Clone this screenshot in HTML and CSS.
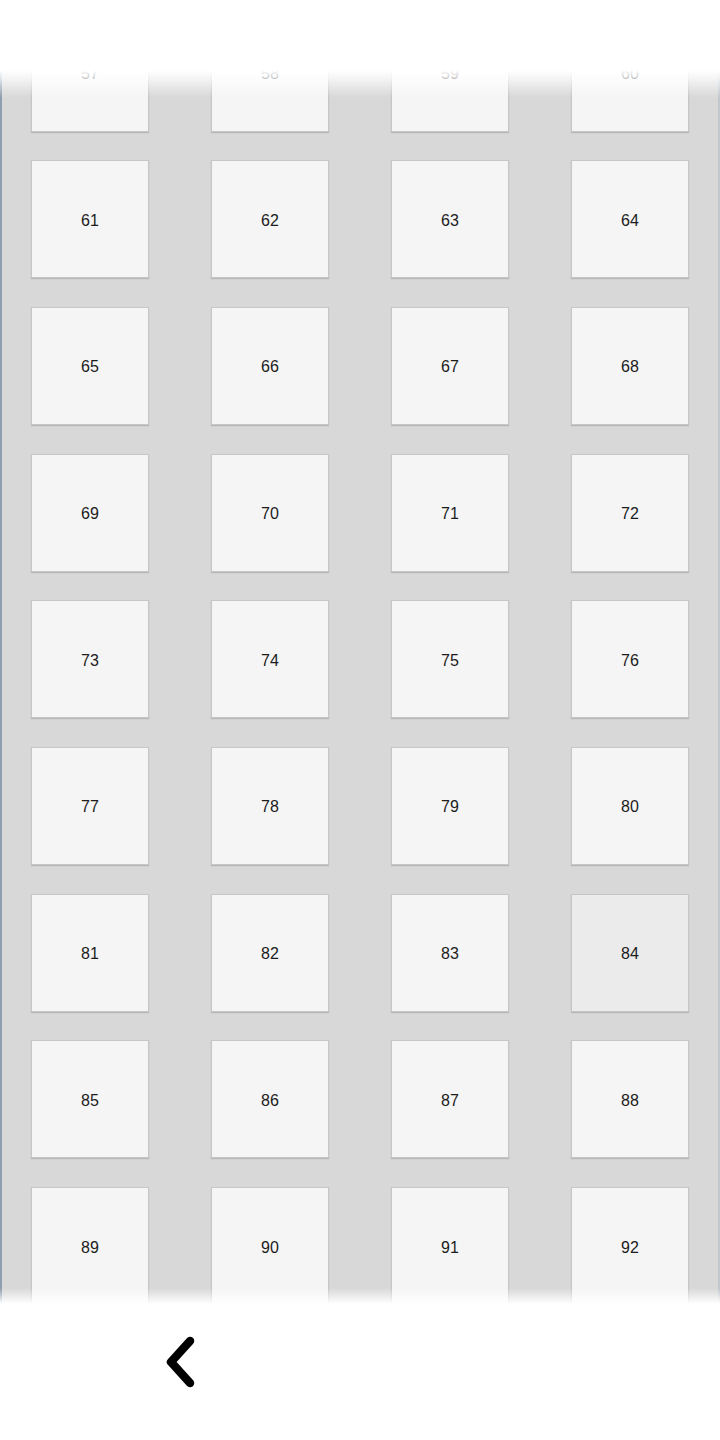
FILE: index.html
```html
<!DOCTYPE html>
<html>
<head>
    <title>Number Grid</title>
    <link rel="stylesheet" href="styles.css">
</head>
<body>
    <div class="board">
        <div class="grid" id="grid"></div>
    </div>

    <div class="topFade"></div>

    <div class="footer">
        <button class="back" aria-label="Back">
            <svg width="40" height="56" viewBox="0 0 40 56">
                <polyline points="25,6 6,27 25,48" fill="none" stroke="#000" stroke-width="8.5" stroke-linecap="round" stroke-linejoin="round"/>
            </svg>
        </button>
    </div>

    <script>
        const grid = document.getElementById("grid");
        for (let n = 57; n <= 96; n++) {
            const tile = document.createElement("div");
            tile.className = n === 84 ? "tile active" : "tile";
            tile.innerText = n;
            grid.appendChild(tile);
        }
    </script>
</body>
</html>
```

FILE: styles.css
```css
html, body { margin: 0; height: 1440px; overflow: hidden; background: #fff; }
body { font-family: "Liberation Sans", Arial, sans-serif; }
.board { height: 1440px; background: #d8d8d8; box-shadow: inset 2px 0 #8d9eae, inset -2px 0 #c2c8ce; }
.grid { display: grid; grid-template-columns: repeat(4, 180px); grid-auto-rows: 118px; row-gap: 28.7px; padding-top: 13.5px; justify-items: center; }
.tile { width: 118px; height: 118px; box-sizing: border-box; border: 1px solid #c6c6c6; background: #f5f5f5; box-shadow: 0 1px 1px rgba(0,0,0,0.15); display: flex; align-items: center; justify-content: center; padding-top: 3px; font-size: 16px; color: #1c1c1c; }
.tile.active { background: #ebebeb; }
.topFade { position: fixed; top: 0; left: 0; right: 0; height: 100px; background: linear-gradient(#fff 0, #fff 70px, rgba(255,255,255,0.75) 78px, rgba(255,255,255,0) 98px); }
.footer { position: fixed; left: 0; right: 0; bottom: 0; height: 152px; background: linear-gradient(rgba(255,255,255,0) 0, #fff 16px); display: flex; align-items: flex-start; padding-top: 47px; box-sizing: border-box; }
.back { margin-left: 165px; padding: 0; border: none; background: none; cursor: pointer; display: flex; }
```
